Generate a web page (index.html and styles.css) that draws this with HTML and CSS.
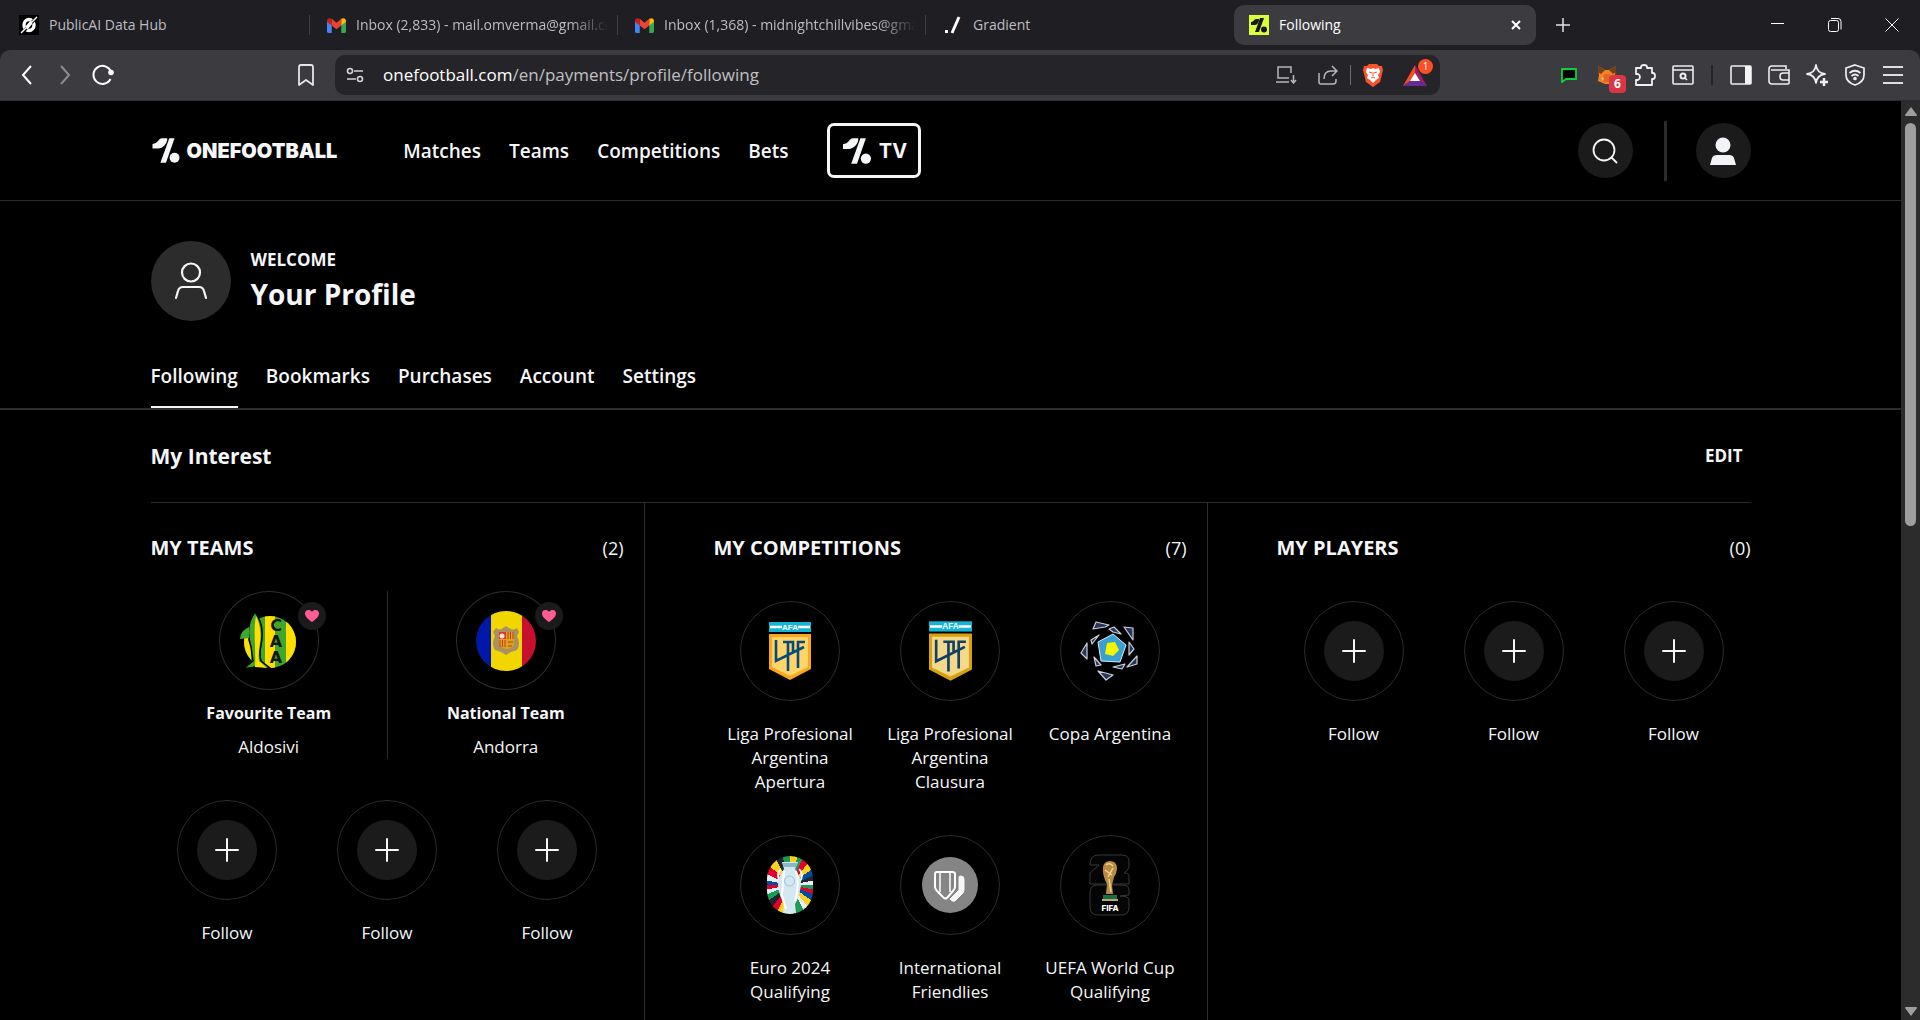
FILE: index.html
```html
<!DOCTYPE html>
<html lang="en">
<head>
<meta charset="utf-8">
<title>Following</title>
<link rel="stylesheet" href="styles.css">
</head>
<body>
<svg class="defs" aria-hidden="true">
  <symbol id="one" viewBox="20 53 84 76"><path d="M21 85V71C38 71 39 54 50 54H66C66 72 52 85 38 85Z"/><path d="M72 54H88L62 128H45Z"/><circle cx="88" cy="113" r="15"/></symbol>
  <symbol id="plus" viewBox="0 0 24 24"><path d="M12 1v22M1 12h22" fill="none" stroke="#f5f6f8" stroke-width="2" stroke-linecap="round"/></symbol>
  <symbol id="heart" viewBox="0 0 16 14"><path d="M8 13C5 11 1 8 1 4.500C1 0.500 6 0 8 3C10 0 15 0.500 15 4.500C15 8 11 11 8 13Z" fill="#ff5c96"/></symbol>
  <symbol id="gmail" viewBox="0 0 20 16"><path d="M0 3v11q0 2 2 2h3V5z" fill="#4285f4"/><path d="M20 3v11q0 2-2 2h-3V5z" fill="#34a853"/><path d="M15 1v7l5-4V2.500Q19-.5 16 .5z" fill="#fbbc04"/><path d="M5 1v7l5 4 5-4V1l-5 4z" fill="#ea4335"/><path d="M0 2.500V4l5 4V1Q1-1 0 2.500" fill="#c5221f"/></symbol>
</svg>

<div class="window">
  <header class="tabstrip">
    <div class="tab">
      <svg class="favicon" viewBox="0 0 20 20"><rect width="20" height="20"/><ellipse cx="10" cy="10" rx="5" ry="5.500" fill="none" stroke="#fff" stroke-width="3.400"/><path d="M3 18L18 2" stroke="#000" stroke-width="3"/><path d="M2 18L18 2M7 12l5-6M8 14l5-6" stroke="#fff" stroke-width="1.500"/></svg>
      <span class="tab-title">PublicAI Data Hub</span>
    </div>
    <div class="tab"><svg class="favicon gmail"><use href="#gmail"/></svg><span class="tab-title fade">Inbox (2,833) - mail.omverma@gmail.com</span></div>
    <div class="tab"><svg class="favicon gmail"><use href="#gmail"/></svg><span class="tab-title fade">Inbox (1,368) - midnightchillvibes@gmail.com</span></div>
    <div class="tab last"><svg class="favicon" viewBox="0 0 20 20"><path d="M16 2L9 18" stroke="#fff" stroke-width="3"/><rect x="2" y="15" width="3" height="3" fill="#fff"/></svg><span class="tab-title">Gradient</span></div>
    <div class="tab active">
      <svg class="favicon" viewBox="0 0 20 20"><rect width="20" height="20" fill="#dbff3d"/><g fill="#17181c"><path d="M2 10V7C5 7 5 4 7 4H10C10 8 8 10 5 10Z"/><path d="M11 3H15L10 17H6Z"/><circle cx="15" cy="14.500" r="3"/></g></svg>
      <span class="tab-title">Following</span>
      <button class="tab-close" aria-label="Close tab"><svg width="10" height="10" viewBox="0 0 10 10"><path d="M1 1l8 8M9 1L1 9" stroke="#fff" stroke-width="2"/></svg></button>
    </div>
    <button class="new-tab" aria-label="New tab"><svg width="14" height="14" viewBox="0 0 14 14"><path d="M7 0v14M0 7h14" stroke="#e4e4e6" stroke-width="1.500"/></svg></button>
    <div class="win-controls">
      <button aria-label="Minimize"><svg width="14" height="14" viewBox="0 0 14 14"><path d="M0 5.500h13" stroke="#fff"/></svg></button>
      <button aria-label="Restore"><svg width="14" height="14" viewBox="0 0 14 14" fill="none" stroke="#fff"><rect x=".5" y="2.500" width="10" height="11" rx="2"/><path d="M3 .5h7q3 0 3 3v8"/></svg></button>
      <button aria-label="Close"><svg width="14" height="14" viewBox="0 0 14 14"><path d="M.5 .5l13 13M13.500 .5l-13 13" stroke="#fff"/></svg></button>
    </div>
  </header>

  <div class="toolbar">
    <button class="tool" aria-label="Back"><svg width="12" height="20" viewBox="0 0 12 20"><path d="M10 1L2 10l8 9" fill="none" stroke="#fff" stroke-width="2"/></svg></button>
    <button class="tool" aria-label="Forward"><svg width="12" height="20" viewBox="0 0 12 20"><path d="M2 1l8 9-8 9" fill="none" stroke="#8b8b90" stroke-width="2"/></svg></button>
    <button class="tool" aria-label="Reload"><svg width="22" height="22" viewBox="0 0 22 22"><path d="M19 8A9 9 0 1 0 18.500 15" fill="none" stroke="#fff" stroke-width="2"/><circle cx="19" cy="8.500" r="2.800" fill="#fff"/></svg></button>
    <button class="tool bookmark" aria-label="Bookmark this page"><svg width="16" height="22" viewBox="0 0 16 22"><path d="M1 3q0-2 2-2h10q2 0 2 2v18l-7-5-7 5z" fill="none" stroke="#e6e6e8" stroke-width="1.800" stroke-linejoin="round"/></svg></button>
    <div class="address">
      <svg width="18" height="16" viewBox="0 0 18 16" fill="none" stroke="#d3d3d6" stroke-width="1.600"><circle cx="4" cy="4" r="2.500"/><path d="M8 4h9M1 12h9"/><circle cx="14" cy="12" r="2.500"/></svg>
      <div class="url" role="textbox" aria-label="Address"><span class="host">onefootball.com</span>/en/payments/profile/following</div>
      <button class="tool install" aria-label="Install app"><svg width="22" height="18" viewBox="0 0 22 18" fill="none" stroke="#b7b7bb" stroke-width="1.500"><path d="M16 7V1H3v11h11M1 16h13M18.500 9v7M16 14l2.500 3 2.500-3"/></svg></button>
      <button class="tool" aria-label="Share"><svg width="20" height="20" viewBox="0 0 20 20" fill="none" stroke="#b7b7bb" stroke-width="1.500"><path d="M1 8v9q0 2 2 2h12q3 0 3-3v-2M6 14q0-8 7-8h5M14 1l5 5-5 5"/></svg></button>
      <span class="address-sep"></span>
      <button class="tool" aria-label="Brave Shields"><svg width="20" height="24" viewBox="0 0 20 24"><path d="M6 1h8l2 2h3l1 4-1 4-2 8-7 5-7-5-2-8-1-4 1-4h3z" fill="#fb542b"/><path d="M4 5l4 1 2-1 2 1 4-1 1 4-2 3 1 3-3 2-3 3-3-3-3-2 1-3-2-3z" fill="#fff"/><path d="M6 9l3 1M14 9l-3 1M10 9v4M8 15l2-1 2 1" stroke="#fb542b" fill="none"/></svg></button>
      <button class="tool rewards" aria-label="Brave Rewards"><svg width="24" height="21" viewBox="0 0 24 21"><path d="M12 0L0 21l12-8z" fill="#ff4724"/><path d="M12 0l12 21-12-8z" fill="#9e1f63"/><path d="M0 21h24l-12-9z" fill="#662d91"/><path d="M12 8l5 8H7z" fill="#fff"/></svg><span class="badge rewards-badge">1</span></button>
    </div>
    <div class="extensions">
      <button class="tool" aria-label="Chat extension"><svg width="16" height="16" viewBox="0 0 16 16"><path d="M1 2h14v10H5l-4 3z" fill="#000" stroke="#0bd13a" stroke-width="1.800"/></svg></button>
      <button class="tool" aria-label="MetaMask"><svg width="20" height="20" viewBox="0 0 20 20"><path d="M1 1l7 4h4l7-4-1 9 1 6-7 3H8l-7-3 1-6z" fill="#f5841f"/><path d="M1 1l7 4-4 4-3-2zM19 1l-7 4 4 4 3-2z" fill="#763e1a"/><path d="M7 9h6l1 8H6z" fill="#e2661b"/><path d="M4 12l3 1-1 3zM16 12l-3 1 1 3z" fill="#d5bfb2"/></svg><span class="badge wallet-badge">6</span></button>
      <button class="tool" aria-label="Extensions"><svg width="22" height="22" viewBox="0 0 22 22"><path d="M2 4h5V3q0-2 3-2t3 2v1h5v5h1q2 0 2 3t-2 3h-1v6H2v-5h2q2-1 2-3t-2-3H2z" fill="none" stroke="#f0f0f2" stroke-width="1.800" stroke-linejoin="round"/></svg></button>
      <button class="tool" aria-label="Search tabs"><svg width="22" height="20" viewBox="0 0 22 20" fill="none" stroke="#ededef" stroke-width="1.600"><rect x="1" y="1" width="20" height="18" rx="1"/><path d="M1 5h20M13 13l2 2"/><circle cx="11" cy="11" r="2.500" stroke-width="2"/></svg></button>
      <span class="toolbar-sep"></span>
      <button class="tool" aria-label="Sidebar"><svg width="22" height="20" viewBox="0 0 22 20"><rect x="1" y="1" width="20" height="18" rx="1" fill="none" stroke="#ededef" stroke-width="1.600"/><path d="M15 1h6v18h-6z" fill="#f4f4f5"/></svg></button>
      <button class="tool" aria-label="Wallet"><svg width="22" height="20" viewBox="0 0 22 20" fill="none" stroke="#ededef" stroke-width="1.600"><path d="M18 4V1H4Q1 1 1 4v12q0 3 3 3h16q1 0 1-1V5H3"/><path d="M21 8h-6q-3 0-3 3.500t3 3.500h6"/></svg></button>
      <button class="tool" aria-label="Leo AI"><svg width="22" height="22" viewBox="0 0 22 22"><path d="M10 1q1 8 9 9-8 1-9 9-1-8-9-9 8-1 9-9z" fill="none" stroke="#f0f0f2" stroke-width="1.800" stroke-linejoin="round"/><path d="M18 14v8M14 18h8" stroke="#f0f0f2" stroke-width="2.500"/></svg></button>
      <button class="tool" aria-label="VPN"><svg width="20" height="22" viewBox="0 0 20 22" fill="none" stroke="#f0f0f2" stroke-width="1.700"><path d="M10 1l9 3v7q0 7-9 10Q1 18 1 11V4z"/><path d="M4.500 9q5.500-4.500 11 0M6.500 12q3.500-3 7 0"/><circle cx="10" cy="14.500" r="1"/></svg></button>
      <button class="tool" aria-label="Menu"><svg width="22" height="20" viewBox="0 0 22 20"><path d="M1 2h20M1 10h20M1 18h20" stroke="#dededf" stroke-width="2"/></svg></button>
    </div>
  </div>

  <div class="viewport">
    <div class="page">
      <header class="site-header">
        <div class="container header-row">
          <a class="logo" href="#"><svg width="28" height="25"><use href="#one"/></svg><span>ONEFOOTBALL</span></a>
          <nav class="main-nav"><a href="#">Matches</a><a href="#">Teams</a><a href="#">Competitions</a><a href="#">Bets</a></nav>
          <a class="tv" href="#"><svg width="30" height="26"><use href="#one"/></svg><span>TV</span></a>
          <div class="header-actions">
            <button class="round" aria-label="Search"><svg width="26" height="26" viewBox="0 0 26 26" fill="none" stroke="#f5f6f8" stroke-width="1.800" stroke-linecap="round"><circle cx="12" cy="12" r="10.500"/><path d="M19.500 19.500l5 5"/></svg></button>
            <span class="header-sep"></span>
            <button class="round" aria-label="Profile"><svg width="26" height="28" viewBox="0 0 26 28" fill="#f2f3f6"><circle cx="13" cy="8" r="7.500"/><path d="M0 28L2 21q1-3 5-3h12q4 0 5 3l2 7z"/></svg></button>
          </div>
        </div>
      </header>

      <main>
        <section class="container profile">
          <div class="avatar"><svg width="34" height="38" viewBox="0 0 34 38" fill="none" stroke="#f5f6f8" stroke-width="2.200" stroke-linecap="round"><circle cx="17" cy="10.500" r="9"/><path d="M2 36L4 29q1-4 5-4h16q4 0 5 4l2 7"/></svg></div>
          <div class="profile-text"><p class="welcome">WELCOME</p><h1>Your Profile</h1></div>
        </section>
        <nav class="profile-tabs"><div class="container tabs-row"><a class="current" href="#">Following</a><a href="#">Bookmarks</a><a href="#">Purchases</a><a href="#">Account</a><a href="#">Settings</a></div></nav>

        <div class="container">
          <div class="interest"><h2>My Interest</h2><button class="edit">EDIT</button></div>
          <div class="columns">
            <section class="column">
              <div class="column-head"><h3>MY TEAMS</h3><span>(2)</span></div>
              <div class="favourites">
                <a class="favourite" href="#">
                  <span class="ring">
                    <svg width="60" height="60" viewBox="0 0 60 60"><defs><clipPath id="ball"><circle cx="31" cy="31" r="26"/></clipPath></defs><g clip-path="url(#ball)"><rect width="60" height="60" fill="#3fa62e"/><path d="M0 0h12v60H0zM26 0h10v60H26zM47 0h13v60H47z" fill="#ffde00"/></g><path d="M16 1C8 12 8 24 12 36L14 50 4 58Q18 56 20 55 26 58 31 57L22 50Q20 44 22 34 26 14 16 1Z" fill="#3fa62e" stroke="#000" stroke-width="1.500"/><path d="M17 5C14 20 17 34 16 56L28 57 20 50Q19 42 21 32 23 16 17 5Z" fill="#ffde00"/><path d="M10 16Q1 20 1 28L10 27Z" fill="#3fa62e"/><g class="caa-letters"><text x="37" y="20">C</text><text x="37" y="36">A</text><text x="37" y="52">A</text></g></svg>
                    <span class="heart"><svg width="16" height="14"><use href="#heart"/></svg></span>
                  </span>
                  <strong>Favourite Team</strong><span class="name">Aldosivi</span>
                </a>
                <a class="favourite" href="#">
                  <span class="ring">
                    <svg width="60" height="60" viewBox="0 0 60 60"><defs><clipPath id="flag"><circle cx="30" cy="30" r="30"/></clipPath></defs><g clip-path="url(#flag)"><rect width="15" height="60" fill="#0018a8"/><rect x="15" width="31" height="60" fill="#f2d600"/><rect x="46" width="14" height="60" fill="#c8102e"/></g><path d="M20 17q4 3 7 0l3-2 3 2q4 3 8 0l2 4-2 4q4 8 0 14l-6 2-5 3-5-3-6-2q-4-6 0-14l-2-4z" fill="#a99160"/><path d="M23 21h15v8H23zM23 29h15v5q-2 4-8 4-6-1-7-5z" fill="#d9a31b"/><path d="M23 21h7v7h-7z" fill="#d93145"/><path d="M32 21v7M34.500 21v7M37 21v7M24 29v7M26.500 29v7M29 29v7M32 31h5M32 35h4" stroke="#c83a1b"/><circle cx="26" cy="25" r="2.500" fill="#f4e3c0"/></svg>
                    <span class="heart"><svg width="16" height="14"><use href="#heart"/></svg></span>
                  </span>
                  <strong>National Team</strong><span class="name">Andorra</span>
                </a>
              </div>
              <div class="grid">
                <button class="item"><span class="ring"><span class="add"><svg width="24" height="24"><use href="#plus"/></svg></span></span><span class="name">Follow</span></button>
                <button class="item"><span class="ring"><span class="add"><svg width="24" height="24"><use href="#plus"/></svg></span></span><span class="name">Follow</span></button>
                <button class="item"><span class="ring"><span class="add"><svg width="24" height="24"><use href="#plus"/></svg></span></span><span class="name">Follow</span></button>
              </div>
            </section>

            <section class="column">
              <div class="column-head"><h3>MY COMPETITIONS</h3><span>(7)</span></div>
              <div class="grid">
                <a class="item" href="#"><span class="ring"><svg width="42" height="58" viewBox="0 0 42 58"><rect width="42" height="10" fill="#12b5d6"/><path d="M1 5h12M29 5h12" stroke="#fff" stroke-width="2.500"/><text class="afa" x="21" y="8">AFA</text><path d="M0 12h42v35L21 58 0 47z" fill="#f9a61a"/><path d="M3 15h36v30L21 54 3 45z" fill="#ffd56a"/><path d="M7 18v21L35 25M14 20h10v11M19 19v30M29 46V20h7" fill="none" stroke="#064a7b" stroke-width="2.600"/></svg></span><span class="name">Liga Profesional Argentina Apertura</span></a>
                <a class="item" href="#"><span class="ring"><svg width="43" height="60" viewBox="0 0 42 58"><rect width="42" height="10" fill="#12b5d6"/><path d="M1 5h12M29 5h12" stroke="#fff" stroke-width="2.500"/><text class="afa" x="21" y="8">AFA</text><path d="M0 12h42v35L21 58 0 47z" fill="#d9a010"/><path d="M3 15h36v30L21 54 3 45z" fill="#f5d98b"/><path d="M7 18v21L35 25M14 20h10v11M19 19v30M29 46V20h7" fill="none" stroke="#123f66" stroke-width="2.600"/></svg></span><span class="name">Liga Profesional Argentina Clausura</span></a>
                <a class="item" href="#"><span class="ring"><svg width="60" height="60" viewBox="0 0 60 60"><path d="M33 13l13 11-6 17-19-1-3-19z" fill="#39a0d2" stroke="#d9eefa"/><path d="M27 22l8-1 4 8-6 6-8-2z" fill="#f3f500"/><g fill="#27365c" stroke="#c9ced8" stroke-width="1.200" stroke-linejoin="round"><path d="M16 1l13 3-4 2-12 2zM44 6l9 1v12zM7 22v16L1 32zM47 46l10-11v8zM18 50l15 4-7 5zM29 8l5-2 7 7-8-2zM11 19l8-5-7 9zM49 21l5 7-5 6zM33 46l12-3-3 5zM14 36l7 8-5 1z"/></g></svg></span><span class="name">Copa Argentina</span></a>
                <a class="item" href="#"><span class="ring"><span class="euro"><svg width="46" height="58" viewBox="0 0 46 58"><path d="M14 13Q8 18 14 27l4 3M32 13q6 5 0 14l-4 3" fill="none" stroke="#eef6fa" stroke-width="2"/><path d="M15 6h16l-3 7q6 8 6 16-2 13-6 19l1 9H16l1-9q-5-8-6-19 0-8 6-16z" fill="#d5e8f1"/><path d="M15 7h16l-2 4H17z" fill="#8bb5ca"/><path d="M17 15l-2 24 4 14M29 15q4 12-1 30" fill="none" stroke="#fff" stroke-width="2"/><circle cx="22.500" cy="25" r="5" fill="none" stroke="#9bc3d7"/></svg></span></span><span class="name">Euro 2024 Qualifying</span></a>
                <a class="item" href="#"><span class="ring"><svg width="56" height="56" viewBox="0 0 56 56"><circle cx="28" cy="28" r="28" fill="#858585"/><path d="M37 20q0-1 2-1 3 0 3 3v11q0 2-2 4l-7 7q-2 1-4-1l-1-1 9-9z" fill="#f7f7f7" stroke="#f7f7f7" stroke-linejoin="round"/><path d="M13 17q0-2 2-2h15q3 0 3 2v13q0 2-2 4l-6 7q-2 1-3 0l-7-7q-2-2-2-4z" fill="#858585" stroke="#fff" stroke-width="2"/><path d="M18 16v19M28 16v19" stroke="#fff" stroke-width="1.500"/></svg></span><span class="name">International Friendlies</span></a>
                <a class="item" href="#"><span class="ring"><svg width="42" height="62" viewBox="0 0 42 62"><path d="M1 11Q1 1 9 1h24q7 0 7 7v5q-1 4-5 6 5 0 5 3v8H1V19l9-8zM8 31h25q7 0 7 5v5l-9 1q9 0 9 4v7q0 8-8 8H9q-8 0-8-8V39q0-8 7-8z" fill="#050505" stroke="#36383a"/><path d="M14 13q1-6 7-6t7 6q0 6-3 10l-2 8 1 9h-7l1-10q-5-9-4-17z" fill="#b98b42"/><path d="M17 11q4-3 7 1M16 16l7 5M24 14l-5 9M20 25l2 13" stroke="#f1d493" stroke-width="1.500" fill="none"/><path d="M14 41h14v6H14z" fill="#1d6c40"/><path d="M13 45h16v2H13z" fill="#b5aa75"/><text class="fifa" x="21" y="57">FIFA</text></svg></span><span class="name">UEFA World Cup Qualifying</span></a>
              </div>
            </section>

            <section class="column">
              <div class="column-head"><h3>MY PLAYERS</h3><span>(0)</span></div>
              <div class="grid">
                <button class="item"><span class="ring"><span class="add"><svg width="24" height="24"><use href="#plus"/></svg></span></span><span class="name">Follow</span></button>
                <button class="item"><span class="ring"><span class="add"><svg width="24" height="24"><use href="#plus"/></svg></span></span><span class="name">Follow</span></button>
                <button class="item"><span class="ring"><span class="add"><svg width="24" height="24"><use href="#plus"/></svg></span></span><span class="name">Follow</span></button>
              </div>
            </section>
          </div>
        </div>
      </main>
    </div>
    <div class="scrollbar" aria-hidden="true">
      <svg width="12" height="9" viewBox="0 0 12 9"><path d="M6 0l6 8q0 1-1 1H1q-1 0-1-1z" fill="#9f9f9f"/></svg>
      <div class="thumb-track"><div class="thumb"></div></div>
      <svg width="12" height="9" viewBox="0 0 12 9"><path d="M6 9l6-8q0-1-1-1H1Q0 0 0 1z" fill="#9f9f9f"/></svg>
    </div>
  </div>
</div>
</body>
</html>
```
FILE: styles.css
```css
* { box-sizing: border-box; }

body {
  margin: 0;
  background: #000;
  color: #f5f6f8;
  font: 17px/24px "Open Sans", "Noto Sans", sans-serif;
}

h1, h2, h3, p { margin: 0; }
a { color: inherit; text-decoration: none; }
button { margin: 0; padding: 0; border: 0; background: none; color: inherit; font: inherit; cursor: pointer; }
svg { display: block; flex: none; }
.defs { position: absolute; width: 0; height: 0; }

.window { display: flex; flex-direction: column; height: 100vh; overflow: hidden; background: #1f1e23; }

/* Tab strip */
.tabstrip { display: flex; flex: none; align-items: center; height: 50px; padding-left: 2px; font-size: 14px; line-height: 20px; color: #bdbdc1; }
.tab { display: flex; align-items: center; gap: 10px; flex: 0 1 308px; min-width: 0; height: 20px; padding: 0 9px 0 17px; border-right: 1px solid #3e3e43; }
.tab.last { border-right-color: transparent; }
.favicon { width: 20px; height: 20px; }
.favicon.gmail { height: 17px; width: 19px; }
.tab-title { flex: 1; min-width: 0; overflow: hidden; white-space: nowrap; }
.fade { -webkit-mask-image: linear-gradient(90deg, #000 85%, transparent); mask-image: linear-gradient(90deg, #000 85%, transparent); }
.tab.active { flex-basis: 302px; height: 40px; padding: 0 15px; border: 0; border-radius: 10px; background: #3c3b40; color: #fff; }
.tab-close, .new-tab { display: grid; place-items: center; width: 10px; height: 20px; }
.new-tab { width: 54px; }
.win-controls { display: flex; margin-left: auto; }
.win-controls button { display: grid; place-items: center; width: 57px; height: 48px; }

/* Toolbar */
.toolbar { display: flex; flex: none; align-items: center; height: 51px; padding: 0 8px; border-bottom: 1px solid #2b2b30; border-radius: 10px 10px 0 0; background: #3c3b40; }
.tool { display: grid; place-items: center; flex: none; width: 38px; height: 40px; }
.bookmark { margin: 0 10px 0 165px; }
.address { display: flex; align-items: center; flex: 0 1 1105px; min-width: 0; height: 40px; padding-left: 11px; border-radius: 10px; background: #252429; }
.url { flex: 1; min-width: 0; margin-left: 19px; overflow: hidden; white-space: nowrap; color: #c0c0c4; }
.host { color: #fff; }
.install { margin-right: 4px; }
.address-sep { width: 1px; height: 20px; margin: 0 3px; background: #6d6d72; }
.rewards, .extensions .tool { position: relative; }
.rewards { margin: 0 6px 0 4px; }
.badge { position: absolute; display: grid; place-items: center; color: #fff; }
.rewards-badge { top: 4px; right: 1px; width: 15px; height: 15px; border-radius: 8px; background: #ff4f27; font-size: 10px; line-height: 15px; }
.wallet-badge { right: 0; bottom: 2px; width: 17px; height: 18px; border-radius: 4px; background: #dc3545; font-size: 12px; line-height: 18px; font-weight: 700; }
.extensions { display: flex; align-items: center; margin-left: auto; }
.toolbar-sep { width: 2px; height: 20px; margin: 0 9px; background: #242328; }

/* Page */
.viewport { display: flex; flex: 1; min-height: 0; background: #000; }
.page { flex: 1; min-width: 0; overflow: hidden; }
.container { max-width: 1600px; margin: 0 auto; }
.scrollbar { display: flex; flex-direction: column; align-items: center; gap: 7px; width: 19px; padding: 6px 0 4px; background: #2c2c2c; }
.thumb-track { flex: 1; width: 11px; }
.thumb { height: 46%; border-radius: 6px; background: #9f9f9f; }

.site-header { border-bottom: 1px solid #2c2c2c; }
.header-row { display: flex; align-items: center; height: 99px; }
.logo { display: flex; align-items: center; gap: 7px; padding-left: 1px; font: 900 20px/24px "Inter", sans-serif; fill: #f5f6f8; }
.main-nav { display: flex; gap: 28px; margin-left: 66px; font-size: 19px; font-weight: 600; }
.tv { display: flex; align-items: center; justify-content: center; gap: 7px; width: 94px; height: 55px; margin-left: 39px; border: 3px solid #f5f6f8; border-radius: 7px; font: 700 20px/24px "Inter", sans-serif; fill: #f5f6f8; }
.header-actions { display: flex; align-items: center; margin-left: auto; }
.round { display: grid; place-items: center; width: 55px; height: 55px; border-radius: 50%; background: #1b1b1b; }
.header-sep { width: 3px; height: 60px; margin: 0 29px 0 31px; background: #2c2c2c; }

.profile { display: flex; align-items: center; gap: 20px; padding: 40px 0; }
.avatar { display: grid; place-items: center; width: 80px; height: 80px; border-radius: 50%; background: #2c2c2c; }
.profile-text { padding-top: 2px; }
.welcome { font-weight: 700; }
h1 { font-size: 28px; line-height: 44px; }

.profile-tabs { border-bottom: 2px solid #2c2c2c; font-size: 19px; font-weight: 600; }
.tabs-row { display: flex; gap: 28px; }
.tabs-row a { padding: 3px 0 18px; border-bottom: 2px solid transparent; }
.tabs-row .current { border-color: #f5f6f8; }

.interest { display: flex; align-items: center; justify-content: space-between; height: 92px; }
.interest h2 { font-size: 21px; }
.edit { padding: 0 8px; font-weight: 700; }

.columns { display: grid; grid-template-columns: 494fr 563fr 543fr; border-top: 1px solid #2c2c2c; min-height: 600px; }
.column { padding: 33px 20px 28px 69px; border-right: 1px solid #2c2c2c; }
.column:first-child { padding-left: 0; }
.column:last-child { padding-right: 0; border: 0; }
.column-head { display: flex; align-items: center; justify-content: space-between; font-size: 18px; }
h3 { font-size: 20px; }

.ring { position: relative; display: grid; place-items: center; width: 100px; height: 100px; border: 1px solid #2c2c2c; border-radius: 50%; }
.add { display: grid; place-items: center; width: 60px; height: 60px; border-radius: 50%; background: #1b1b1b; }
.heart { position: absolute; top: 10px; right: -8px; display: grid; place-items: center; width: 28px; height: 28px; border-radius: 50%; background: #1b1b1b; }

.favourites { display: grid; grid-template-columns: 1fr 1fr; margin-top: 31px; }
.favourite { display: flex; flex-direction: column; align-items: center; height: 168px; }
.favourite + .favourite { border-left: 1px solid #2c2c2c; }
.favourite strong { margin: 11px 0 10px; font-size: 16px; }
.grid { display: grid; grid-template-columns: repeat(3, 160px); justify-content: center; row-gap: 41px; margin: 41px -4px 0; }
.item { display: flex; flex-direction: column; align-items: center; padding: 0 12px; text-align: center; }
.item .name { margin-top: 21px; }

.caa-letters { font: 700 16px "DejaVu Sans", sans-serif; fill: #151515; text-anchor: middle; }
.afa { font: 700 8px "Liberation Sans", sans-serif; fill: #fff; text-anchor: middle; }
.fifa { font: 800 8px "Inter", sans-serif; fill: #fff; text-anchor: middle; }
.euro {
  display: block;
  border-radius: 23px;
  background: conic-gradient(#ffd21e 0 4%, #1c9b55 0 7%, #e4002b 0 11%, #ffd21e 0 15%, #034ea2 0 19%, #20242e 0 22%, #e9eef2 0 25%, #1c9b55 0 28%, #e4002b 0 31%, #034ea2 0 35%, #ffd21e 0 39%, #e9eef2 0 42%, #1c9b55 0 48%, #e9eef2 0 53%, #ffd21e 0 57%, #e4002b 0 61%, #20242e 0 65%, #1c9b55 0 69%, #e9eef2 0 72%, #e4002b 0 75%, #034ea2 0 78%, #e9eef2 0 82%, #e4002b 0 87%, #ffd21e 0 92%, #20242e 0 96%, #1c9b55 0);
}
```
